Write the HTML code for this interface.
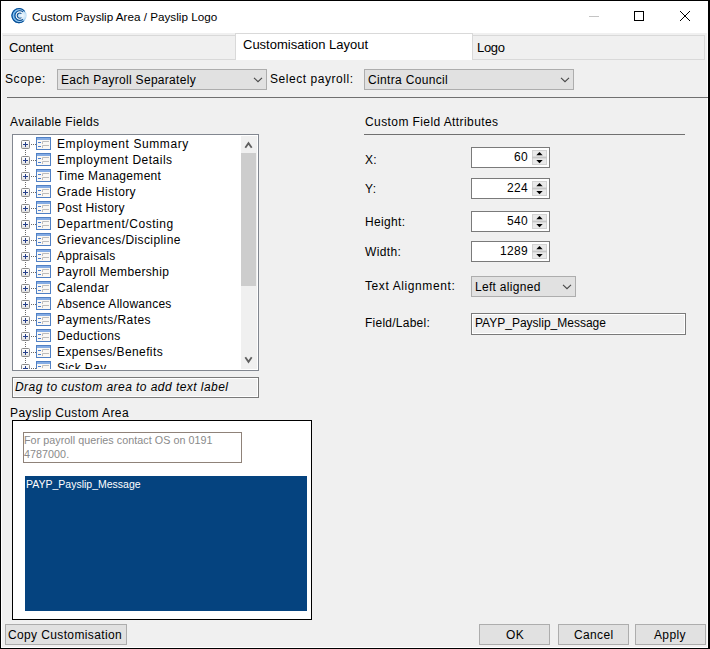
<!DOCTYPE html>
<html><head><meta charset="utf-8">
<style>
*{margin:0;padding:0;box-sizing:border-box}
html,body{width:710px;height:649px;overflow:hidden;background:#f0f0f0}
body{position:relative;font-family:"Liberation Sans",sans-serif;color:#000}
.a{position:absolute}
.t{position:absolute;white-space:nowrap;font-size:12px;line-height:14px;letter-spacing:.35px}
#win{position:absolute;left:0;top:0;width:710px;height:649px;border-left:1px solid #000;border-top:1px solid #000;border-right:2px solid #000;border-bottom:1px solid #000;background:#f0f0f0}
#title{position:absolute;left:1px;top:1px;width:707px;height:32px;background:#fff}
.wl{position:absolute;background:#fff}
.combo{position:absolute;background:#e1e1e1;border:1px solid #adadad}
.chev{position:absolute;width:7px;height:7px;border-right:1px solid #444;border-bottom:1px solid #444;transform:rotate(45deg)}
.box{position:absolute;background:#fff;border:1px solid #7a7a7a}
.ro{position:absolute;background:#f0f0f0;border:1px solid #7a7a7a;box-shadow:inset 0 0 0 1px #fff}
.btn{position:absolute;background:#e1e1e1;border:1px solid #adadad;height:21px}
.spin{position:absolute;width:15px;height:15px;background:#e6e6e6;border:1px solid #d4d4d4}
.row{position:absolute;left:21px;height:16px;width:220px}
</style></head><body>
<div id="win"></div>
<div id="title"></div>
<!-- inner white lines of window frame -->
<div class="wl" style="left:1px;top:33px;width:1px;height:614px"></div>
<div class="wl" style="left:1px;top:647px;width:707px;height:1px"></div>
<div class="wl" style="left:707px;top:33px;width:1px;height:615px"></div>

<!-- title icon -->
<svg class="a" style="left:11px;top:8px" width="16" height="16" viewBox="0 0 16 16">
<defs><radialGradient id="ig" cx="0.72" cy="0.5" r="0.7"><stop offset="0" stop-color="#f2f9fe"/><stop offset="0.3" stop-color="#cfe7f8"/><stop offset="0.65" stop-color="#5aaaea"/><stop offset="1" stop-color="#1c7cd4"/></radialGradient></defs>
<circle cx="8" cy="7.6" r="7.6" fill="url(#ig)"/>
<path d="M13.66 3.49 A7.00 7.00 0 1 0 12.68 12.80" fill="none" stroke="#0b4e92" stroke-width="1.1"/>
<path d="M12.44 3.87 A5.80 5.80 0 1 0 12.44 11.33" fill="none" stroke="#e8f4fc" stroke-width="0.8" opacity="0.7"/>
<path d="M11.18 4.77 A3.70 3.70 0 1 0 11.18 10.43" fill="none" stroke="#0b4e92" stroke-width="3.3"/>
<path d="M11.46 5.03 A3.70 3.70 0 1 0 11.46 10.17" fill="none" stroke="#ffffff" stroke-width="1.1"/>
</svg>
<div class="t" style="left:32px;top:10px;font-size:11.7px;letter-spacing:0">Custom Payslip Area / Payslip Logo</div>
<!-- window buttons -->
<div class="a" style="left:589px;top:16px;width:10px;height:1px;background:#c4c4c4"></div>
<div class="a" style="left:634px;top:11px;width:10px;height:10px;border:1px solid #000"></div>
<svg class="a" style="left:679px;top:10px" width="12" height="12" viewBox="0 0 12 12"><path d="M1 1L11 11M11 1L1 11" stroke="#000" stroke-width="1"/></svg>

<!-- tabs -->
<div class="a" style="left:3px;top:35px;width:232px;height:25px;background:#f0f0f0;border-top:1px solid #d9d9d9;border-bottom:1px solid #d9d9d9"></div>
<div class="a" style="left:472px;top:35px;width:233px;height:25px;background:#f0f0f0;border:1px solid #d9d9d9"></div>
<div class="a" style="left:235px;top:33px;width:238px;height:27px;background:#fff;border:1px solid #d9d9d9;border-bottom:none"></div>
<div class="t" style="left:9px;top:41px;font-size:13px;letter-spacing:-.2px">Content</div>
<div class="t" style="left:243px;top:38px;font-size:13px;letter-spacing:0">Customisation Layout</div>
<div class="t" style="left:477px;top:41px;font-size:13px;letter-spacing:-.3px">Logo</div>

<!-- scope row -->
<div class="t" style="left:5px;top:72px;letter-spacing:.6px">Scope:</div>
<div class="combo" style="left:57px;top:69px;width:210px;height:21px"></div>
<div class="t" style="left:61px;top:73px;letter-spacing:.3px">Each Payroll Separately</div>
<svg class="a" style="left:253px;top:77px" width="10" height="6"><path d="M1 0.8L5 4.6L9 0.8" fill="none" stroke="#484848" stroke-width="1.15"/></svg>
<div class="t" style="left:270px;top:72px;letter-spacing:.55px">Select payroll:</div>
<div class="combo" style="left:364px;top:69px;width:210px;height:21px"></div>
<div class="t" style="left:368px;top:73px;letter-spacing:.33px">Cintra Council</div>
<svg class="a" style="left:560px;top:77px" width="10" height="6"><path d="M1 0.8L5 4.6L9 0.8" fill="none" stroke="#484848" stroke-width="1.15"/></svg>
<div class="a" style="left:7px;top:97px;width:701px;height:1px;background:#707070"></div>

<!-- left panel -->
<div class="t" style="left:10px;top:115px">Available Fields</div>
<div class="a" style="left:12px;top:134px;width:247px;height:237px;background:#fff;border:1px solid #828790"></div>
<div class="a" style="left:241px;top:136px;width:16px;height:233px;background:#f0f0f0"></div>
<div class="a" style="left:241px;top:153px;width:15px;height:133px;background:#cdcdcd"></div>
<svg class="a" style="left:241px;top:136px" width="16" height="233" viewBox="0 0 16 233">
<path d="M4.3 11.8L7.5 7.2L10.7 11.8" fill="none" stroke="#606060" stroke-width="1.8"/>
<path d="M4.3 221.2L7.5 225.8L10.7 221.2" fill="none" stroke="#606060" stroke-width="1.8"/>
</svg>
<svg width="0" height="0" style="position:absolute">
<defs>
<linearGradient id="pg" x1="0" y1="0" x2="0" y2="1"><stop offset="0" stop-color="#ffffff"/><stop offset="0.5" stop-color="#f4f4f4"/><stop offset="1" stop-color="#dcdcdc"/></linearGradient>
<symbol id="ti" viewBox="0 0 30 13">
<rect x="0.5" y="3.5" width="8" height="8" rx="1" fill="url(#pg)" stroke="#8a8a8a"/>
<path d="M2 7.5H7M4.5 5V10" stroke="#253f8a" stroke-width="1"/>
<path d="M10 7.5H11M12 7.5H13M14 7.5H15" stroke="#6a6a6a" stroke-width="1"/>
<rect x="15.5" y="0.5" width="14" height="12" fill="#faf8f4" stroke="#5080c4"/>
<rect x="16" y="1" width="13" height="2" fill="#84ace4"/>
<path d="M17 5.5H20M17 9.5H20" stroke="#4a7ed0" stroke-width="1"/>
<path d="M21.5 7V4.5H28M21.5 11V8.5H28" fill="none" stroke="#bcbcbc" stroke-width="1"/>
</symbol>
<symbol id="sp" viewBox="0 0 15 15"><rect x="0" y="0" width="15" height="15" fill="#e9e9e9"/><rect x="0.5" y="0.5" width="14" height="14" fill="none" stroke="#d2d2d2"/><rect x="0" y="6.6" width="15" height="1.8" fill="#c6c6c6"/><path d="M4.3 5.2L7.5 2L10.7 5.2Z" fill="#000"/><path d="M4.3 10L7.5 13.2L10.7 10Z" fill="#000"/></symbol>
</defs></svg>
<div class="a" style="left:13px;top:135px;width:228px;height:234px;overflow:hidden">
<svg class="a" style="left:0;top:0" width="40" height="240">
<path d="M12.5 15V240" stroke="#6a6a6a" stroke-dasharray="1 1"/>
</svg>
</div>
<div id="tree" class="a" style="left:13px;top:135px;width:228px;height:234px;overflow:hidden">
<svg class="a" style="left:8px;top:2px" width="30" height="13" viewBox="0 0 30 13"><use href="#ti"/></svg>
<div class="t" style="left:44px;top:2px;letter-spacing:0.58px">Employment Summary</div>
<svg class="a" style="left:8px;top:18px" width="30" height="13" viewBox="0 0 30 13"><use href="#ti"/></svg>
<div class="t" style="left:44px;top:18px;letter-spacing:0.49px">Employment Details</div>
<svg class="a" style="left:8px;top:34px" width="30" height="13" viewBox="0 0 30 13"><use href="#ti"/></svg>
<div class="t" style="left:44px;top:34px;letter-spacing:0.31px">Time Management</div>
<svg class="a" style="left:8px;top:50px" width="30" height="13" viewBox="0 0 30 13"><use href="#ti"/></svg>
<div class="t" style="left:44px;top:50px;letter-spacing:0.38px">Grade History</div>
<svg class="a" style="left:8px;top:66px" width="30" height="13" viewBox="0 0 30 13"><use href="#ti"/></svg>
<div class="t" style="left:44px;top:66px;letter-spacing:0.25px">Post History</div>
<svg class="a" style="left:8px;top:82px" width="30" height="13" viewBox="0 0 30 13"><use href="#ti"/></svg>
<div class="t" style="left:44px;top:82px;letter-spacing:0.56px">Department/Costing</div>
<svg class="a" style="left:8px;top:98px" width="30" height="13" viewBox="0 0 30 13"><use href="#ti"/></svg>
<div class="t" style="left:44px;top:98px;letter-spacing:0.40px">Grievances/Discipline</div>
<svg class="a" style="left:8px;top:114px" width="30" height="13" viewBox="0 0 30 13"><use href="#ti"/></svg>
<div class="t" style="left:44px;top:114px;letter-spacing:0.24px">Appraisals</div>
<svg class="a" style="left:8px;top:130px" width="30" height="13" viewBox="0 0 30 13"><use href="#ti"/></svg>
<div class="t" style="left:44px;top:130px;letter-spacing:0.34px">Payroll Membership</div>
<svg class="a" style="left:8px;top:146px" width="30" height="13" viewBox="0 0 30 13"><use href="#ti"/></svg>
<div class="t" style="left:44px;top:146px;letter-spacing:0.44px">Calendar</div>
<svg class="a" style="left:8px;top:162px" width="30" height="13" viewBox="0 0 30 13"><use href="#ti"/></svg>
<div class="t" style="left:44px;top:162px;letter-spacing:0.25px">Absence Allowances</div>
<svg class="a" style="left:8px;top:178px" width="30" height="13" viewBox="0 0 30 13"><use href="#ti"/></svg>
<div class="t" style="left:44px;top:178px;letter-spacing:0.42px">Payments/Rates</div>
<svg class="a" style="left:8px;top:194px" width="30" height="13" viewBox="0 0 30 13"><use href="#ti"/></svg>
<div class="t" style="left:44px;top:194px;letter-spacing:0.37px">Deductions</div>
<svg class="a" style="left:8px;top:210px" width="30" height="13" viewBox="0 0 30 13"><use href="#ti"/></svg>
<div class="t" style="left:44px;top:210px;letter-spacing:0.39px">Expenses/Benefits</div>
<svg class="a" style="left:8px;top:226px" width="30" height="13" viewBox="0 0 30 13"><use href="#ti"/></svg>
<div class="t" style="left:44px;top:226px;letter-spacing:0.35px">Sick Pay</div>
</div>

<div class="ro" style="left:12px;top:377px;width:247px;height:21px"></div>
<div class="t" style="left:15px;top:380px;font-style:italic;letter-spacing:.45px">Drag to custom area to add text label</div>

<div class="t" style="left:10px;top:406px;letter-spacing:.4px">Payslip Custom Area</div>
<div class="a" style="left:12px;top:420px;width:300px;height:200px;background:#fff;border:1px solid #000"></div>
<div class="a" style="left:23px;top:432px;width:219px;height:31px;border:1px solid #8f8279;background:#fff"></div>
<div class="t" style="left:24px;top:433px;font-size:10.75px;letter-spacing:.04px;line-height:14px;color:#8a8a8a">For payroll queries contact OS on 0191</div>
<div class="t" style="left:24px;top:447px;font-size:10.75px;letter-spacing:.04px;line-height:14px;color:#8a8a8a">4787000.</div>
<div class="a" style="left:25px;top:476px;width:282px;height:135px;background:#05437f"></div>
<div class="t" style="left:26px;top:477px;font-size:10.5px;letter-spacing:0;color:#fff">PAYP_Payslip_Message</div>

<div class="btn" style="left:5px;top:624px;width:122px"></div>
<div class="t" style="left:8px;top:628px;letter-spacing:.37px">Copy Customisation</div>

<!-- right panel -->
<div class="t" style="left:365px;top:115px;letter-spacing:.41px">Custom Field Attributes</div>
<div class="a" style="left:364px;top:134px;width:321px;height:1px;background:#707070"></div>

<div class="t" style="left:365px;top:153px">X:</div>
<div class="t" style="left:365px;top:182px">Y:</div>
<div class="t" style="left:365px;top:215px">Height:</div>
<div class="t" style="left:365px;top:245px">Width:</div>
<div class="t" style="left:365px;top:279px;letter-spacing:.6px">Text Alignment:</div>
<div class="t" style="left:365px;top:316px;letter-spacing:.25px">Field/Label:</div>

<div id="spins">
<div class="box" style="left:471px;top:147px;width:79px;height:21px"></div>
<div class="t" style="left:471px;width:57px;text-align:right;top:150px;letter-spacing:.3px">60</div>
<svg class="a" style="left:532px;top:150px" width="15" height="15" viewBox="0 0 15 15"><use href="#sp"/></svg>
<div class="box" style="left:471px;top:178px;width:79px;height:21px"></div>
<div class="t" style="left:471px;width:57px;text-align:right;top:181px;letter-spacing:.3px">224</div>
<svg class="a" style="left:532px;top:181px" width="15" height="15" viewBox="0 0 15 15"><use href="#sp"/></svg>
<div class="box" style="left:471px;top:211px;width:79px;height:21px"></div>
<div class="t" style="left:471px;width:57px;text-align:right;top:214px;letter-spacing:.3px">540</div>
<svg class="a" style="left:532px;top:214px" width="15" height="15" viewBox="0 0 15 15"><use href="#sp"/></svg>
<div class="box" style="left:471px;top:241px;width:79px;height:21px"></div>
<div class="t" style="left:471px;width:57px;text-align:right;top:244px;letter-spacing:.3px">1289</div>
<svg class="a" style="left:532px;top:244px" width="15" height="15" viewBox="0 0 15 15"><use href="#sp"/></svg>
</div>

<div class="combo" style="left:471px;top:276px;width:105px;height:21px"></div>
<div class="t" style="left:475px;top:280px;letter-spacing:.3px">Left aligned</div>
<svg class="a" style="left:562px;top:284px" width="10" height="6"><path d="M1 0.8L5 4.6L9 0.8" fill="none" stroke="#484848" stroke-width="1.15"/></svg>

<div class="ro" style="left:471px;top:313px;width:215px;height:22px"></div>
<div class="t" style="left:475px;top:316px;letter-spacing:0">PAYP_Payslip_Message</div>

<div class="btn" style="left:479px;top:624px;width:71px"></div>
<div class="t" style="left:506px;top:628px">OK</div>
<div class="btn" style="left:558px;top:624px;width:71px"></div>
<div class="t" style="left:574px;top:628px">Cancel</div>
<div class="btn" style="left:635px;top:624px;width:71px"></div>
<div class="t" style="left:654px;top:628px">Apply</div>

</body></html>
